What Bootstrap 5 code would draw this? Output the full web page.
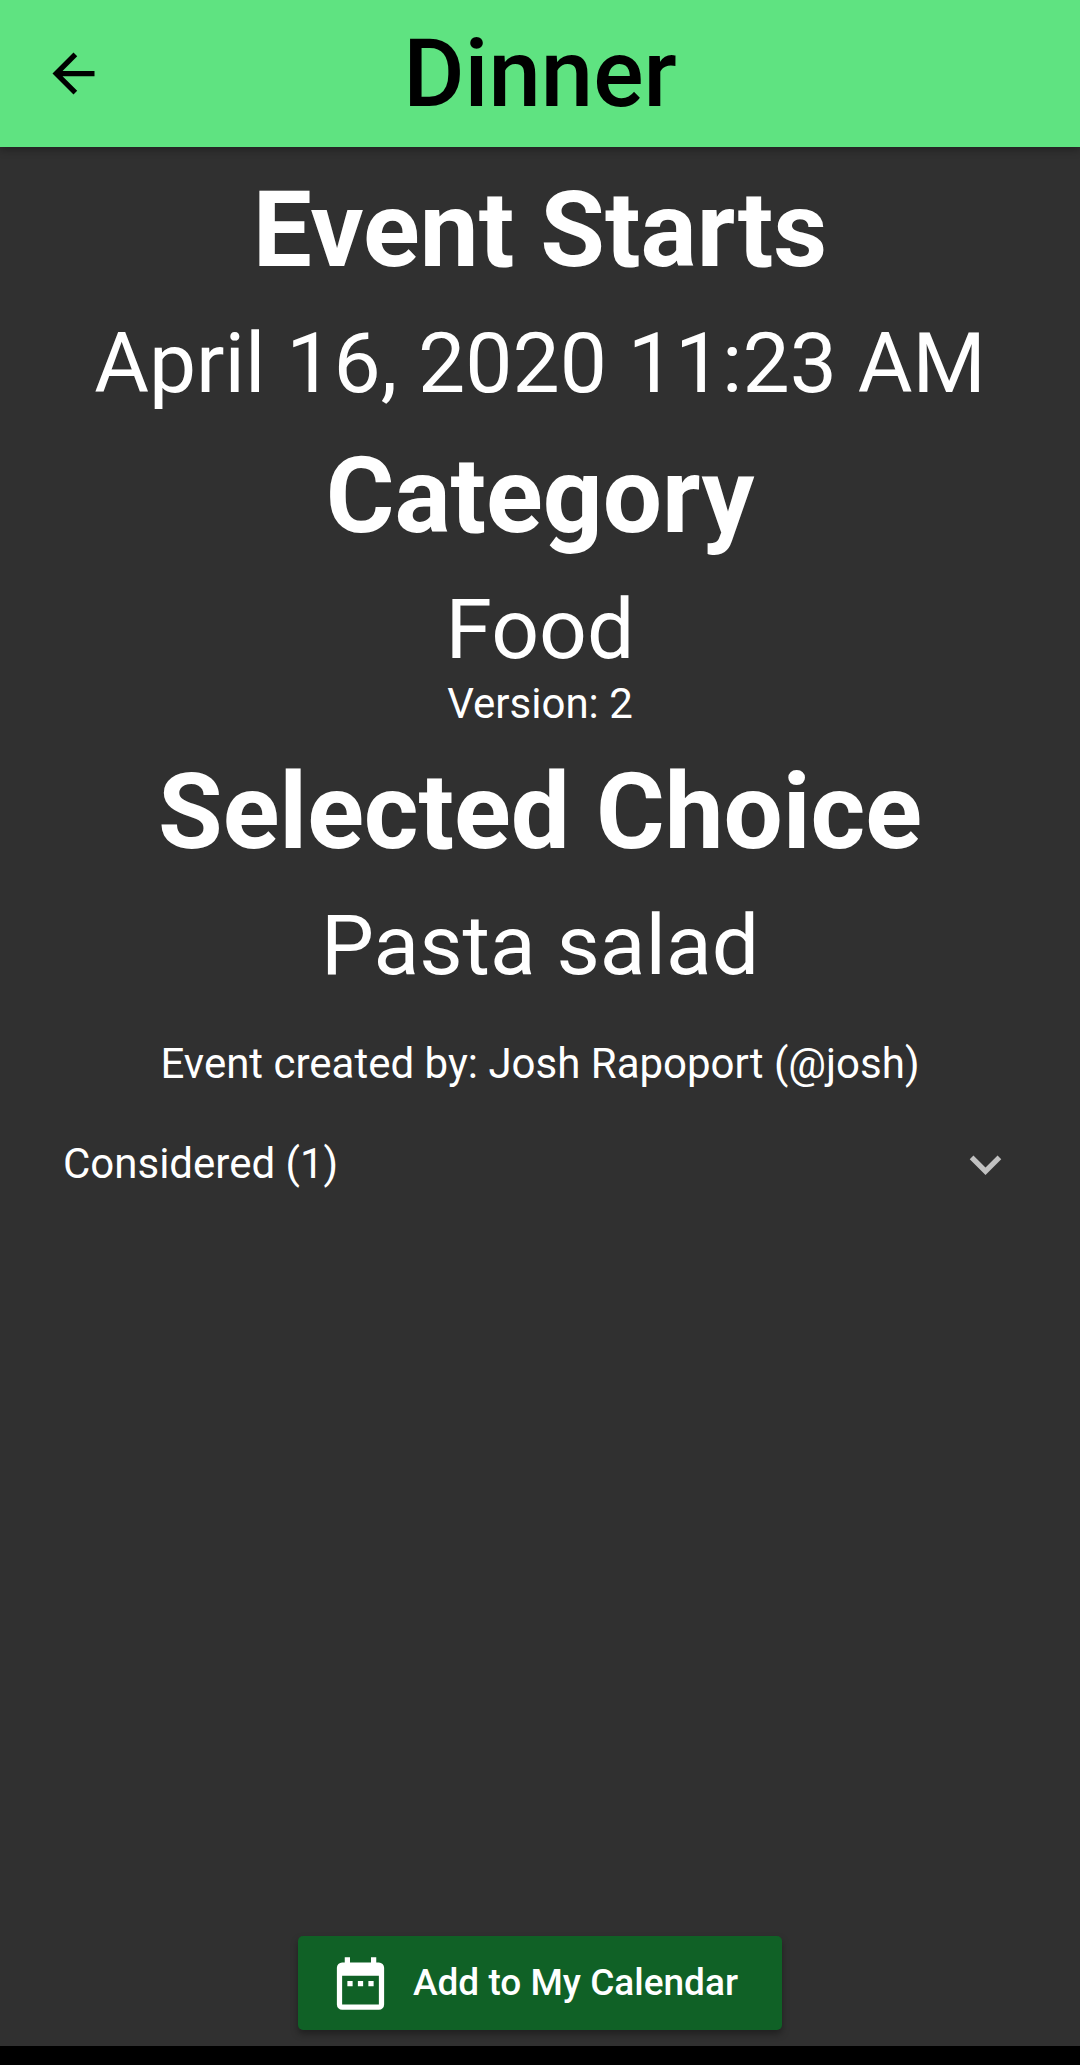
<!DOCTYPE html>
<html lang="en">
<head>
<meta charset="utf-8">
<meta name="viewport" content="width=device-width, initial-scale=1">
<title>Dinner</title>
<link href="https://cdn.jsdelivr.net/npm/bootstrap@5.3.0/dist/css/bootstrap.min.css" rel="stylesheet">
<style>
body{font-family:Roboto,sans-serif;background:#303030;color:#fff}
.app-bar{height:147px;background:#5fe381;color:#000;box-shadow:0 3px 8px rgba(0,0,0,.3)}
.app-bar .side{width:147px;height:147px}
.app-bar h1{font-size:94px;line-height:108px;font-weight:500}
.section-title{font-size:105px;line-height:123px;font-weight:700;margin:22px 0 0}
.section-value{font-size:84px;line-height:99px;margin:22px 0 0}
.detail{font-size:42px;line-height:50px;margin:0}
.creator{margin-top:44px}
.considered{padding:0 63px;height:150px}
.cal-btn{background:#106126;font-size:37px;line-height:44px;font-weight:500;height:94px;padding:0 44px 0 31px;gap:21px;border-radius:5px;box-shadow:0 4px 7px rgba(0,0,0,.35)}
.cal-btn:hover{background:#14702d}
.nav-strip{height:19px;background:#000}
</style>
</head>
<body class="d-flex flex-column min-vh-100">
<header class="app-bar d-flex align-items-center">
<a class="side d-flex align-items-center justify-content-center text-reset" href="#" aria-label="Back"><svg width="63" height="63" viewBox="0 0 24 24" fill="currentColor"><path d="M20 11H7.83l5.59-5.59L12 4l-8 8 8 8 1.41-1.41L7.83 13H20v-2z"/></svg></a>
<h1 class="flex-grow-1 text-center m-0">Dinner</h1>
<div class="side"></div>
</header>
<main class="flex-grow-1 text-center">
<h2 class="section-title">Event Starts</h2>
<p class="section-value">April 16, 2020 11:23 AM</p>
<h2 class="section-title">Category</h2>
<p class="section-value">Food</p>
<p class="detail">Version: 2</p>
<h2 class="section-title">Selected Choice</h2>
<p class="section-value">Pasta salad</p>
<p class="detail creator">Event created by: Josh Rapoport (@josh)</p>
<button class="considered detail btn w-100 text-reset d-flex justify-content-between align-items-center border-0" type="button" aria-expanded="false"><span>Considered (1)</span><svg width="63" height="63" viewBox="0 0 24 24" fill="#c1c1c1"><path d="M16.59 8.59 12 13.17 7.41 8.59 6 10l6 6 6-6z"/></svg></button>
</main>
<footer class="d-flex justify-content-center pb-3">
<button class="cal-btn btn text-white d-flex align-items-center border-0" type="button"><svg width="63" height="63" viewBox="0 0 24 24" fill="currentColor"><path fill-rule="evenodd" d="M6 2H8V4H16V2H18V4H19A2 2 0 0 1 21 6V20A2 2 0 0 1 19 22H5A2 2 0 0 1 3 20V6A2 2 0 0 1 5 4H6ZM5 9V20H19V9ZM7 11H9V13H7ZM11 11H13V13H11ZM15 11H17V13H15Z"/></svg>Add to My Calendar</button>
</footer>
<div class="nav-strip"></div>
</body>
</html>
